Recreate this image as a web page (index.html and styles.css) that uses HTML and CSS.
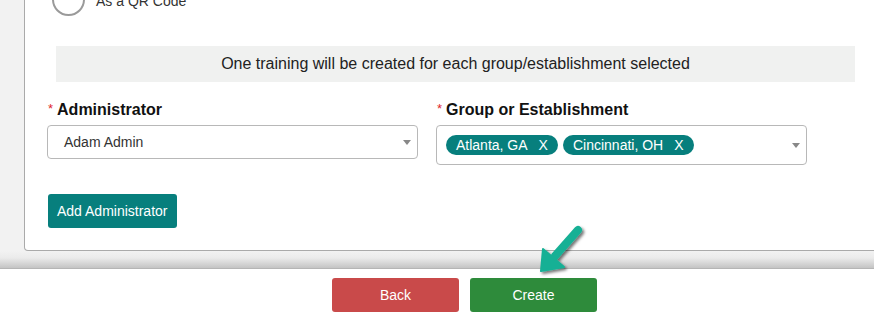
FILE: index.html
```html
<!DOCTYPE html>
<html lang="en">
  <head>
    <meta charset="UTF-8" />
    <meta name="viewport" content="width=device-width, initial-scale=1.0" />
    <title>Create Training</title>
    <link rel="stylesheet" href="styles.css">
  </head>
  <body>
    <div class="page">
      <div class="panelWrap">
        <div class="card">
          <div class="radioRow">
            <span class="radio"></span>
            <span class="radioLabel">As a QR Code</span>
          </div>

          <div class="notice">One training will be created for each group/establishment selected</div>

          <div class="fields">
            <div class="field">
              <label class="fieldLabel"><span class="req">*</span>Administrator</label>
              <div class="select">
                <span class="selectValue">Adam Admin</span>
                <span class="caret"></span>
              </div>
            </div>
            <div class="field">
              <label class="fieldLabel"><span class="req">*</span>Group or Establishment</label>
              <div class="select multi">
                <span class="tag">Atlanta, GA<span class="tagX">X</span></span>
                <span class="tag">Cincinnati, OH<span class="tagX">X</span></span>
                <span class="caret"></span>
              </div>
            </div>
          </div>

          <button class="addBtn">Add Administrator</button>
        </div>
      </div>

      <div class="footerShade"></div>

      <div class="footer">
        <button class="backBtn">Back</button>
        <button class="createBtn">Create</button>
      </div>

      <svg class="pointer" width="60" height="60" viewBox="0 0 60 60">
        <defs>
          <filter id="shadow" x="-30%" y="-30%" width="160%" height="160%">
            <feDropShadow dx="2" dy="2" stdDeviation="1.5" flood-color="#000" flood-opacity="0.55" />
          </filter>
        </defs>
        <g filter="url(#shadow)">
          <line x1="40" y1="6" x2="17" y2="32" stroke="#17b095" stroke-width="8" stroke-linecap="round" />
          <polygon points="3,47 5,25 26,43" fill="#17b095" stroke="#17b095" stroke-width="2" stroke-linejoin="round" />
        </g>
      </svg>
    </div>
  </body>
</html>
```

FILE: styles.css
```css
body {
  margin: 0;
  font-family: "Liberation Sans", Arial, sans-serif;
  color: #333;
  background: #fff;
}

.page {
  position: relative;
  width: 874px;
  height: 318px;
  overflow: hidden;
}

.panelWrap {
  background: #f2f2f2;
  padding-left: 24px;
}

.card {
  box-sizing: border-box;
  width: 863px;
  background: #fff;
  border: 1px solid #aaa;
  border-top: none;
  border-radius: 0 0 4px 4px;
  padding: 0 31px 22px 22px;
}

.radioRow {
  display: flex;
  align-items: center;
  gap: 11px;
  margin-top: -17px;
  margin-left: 5px;
}

.radio {
  box-sizing: border-box;
  width: 33px;
  height: 33px;
  border: 2px solid #9a9a9a;
  border-radius: 50%;
}

.radioLabel {
  font-size: 14px;
  color: #333;
  margin-top: 3px;
}

.notice {
  margin: 30px 0 0 9px;
  height: 36px;
  background: #f0f1f0;
  display: flex;
  align-items: center;
  justify-content: center;
  font-size: 16px;
  color: #222;
}

.fields {
  display: grid;
  grid-template-columns: 371px 371px;
  column-gap: 18px;
  align-items: start;
  margin-top: 17px;
}

.fieldLabel {
  display: block;
  font-size: 16px;
  font-weight: bold;
  color: #111;
  line-height: 19px;
  margin-bottom: 6px;
}

.req {
  color: #e0262b;
  font-size: 13px;
  font-weight: normal;
  vertical-align: 2px;
  margin: 0 4px 0 1px;
}

.select {
  box-sizing: border-box;
  position: relative;
  height: 34px;
  border: 1px solid #b8b8b8;
  border-radius: 4px;
  display: flex;
  align-items: center;
  padding-left: 16px;
  font-size: 14px;
  color: #333;
}

.select.multi {
  height: 40px;
  padding-left: 9px;
  gap: 5px;
}

.caret {
  position: absolute;
  right: 6px;
  top: 50%;
  margin-top: -2px;
  width: 0;
  height: 0;
  border-left: 4px solid transparent;
  border-right: 4px solid transparent;
  border-top: 5px solid #888;
}

.tag {
  display: inline-flex;
  align-items: center;
  height: 20px;
  padding: 0 10px;
  border-radius: 10px;
  background: #077f7d;
  color: #fff;
  font-size: 14px;
}

.tagX {
  margin-left: 11px;
}

button {
  font-family: "Liberation Sans", Arial, sans-serif;
  font-size: 14px;
  color: #fff;
  border: none;
  border-radius: 3px;
  cursor: pointer;
}

.addBtn {
  margin: 29px 0 0 1px;
  height: 34px;
  padding: 0 9px;
  background: #077f7d;
}

.footerShade {
  height: 17px;
  border-bottom: 1px solid #b5b5b5;
  background: linear-gradient(#f2f2f2, #ebebeb 40%, #c4c4c4);
}

.footer {
  display: flex;
  gap: 11px;
  padding: 9px 0 0 332px;
}

.backBtn,
.createBtn {
  width: 127px;
  height: 34px;
}

.backBtn {
  background: #c94a4a;
}

.createBtn {
  background: #2e8b3b;
}

.pointer {
  position: absolute;
  left: 538px;
  top: 224px;
}
```
